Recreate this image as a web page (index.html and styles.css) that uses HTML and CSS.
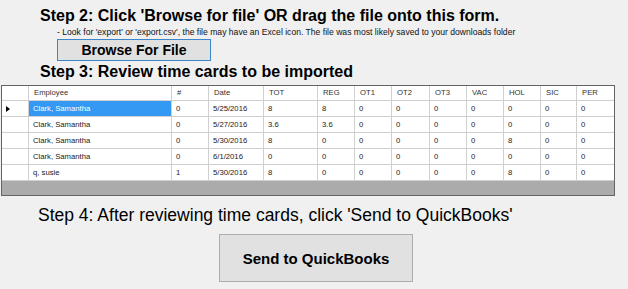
FILE: index.html
```html
<!DOCTYPE html>
<html lang="en">
<head>
    <meta charset="UTF-8">
    <title>Import Time Cards</title>
    <link rel="stylesheet" href="styles.css">
</head>
<body>
    <div class="import-form">
        <h2 class="step-title">Step 2: Click 'Browse for file' OR drag the file onto this form.</h2>
        <p class="hint">- Look for 'export' or 'export.csv', the file may have an Excel icon. The file was most likely saved to your downloads folder</p>
        <button type="button" class="browse-btn">Browse For File</button>

        <h2 class="step-title">Step 3: Review time cards to be imported</h2>

        <!-- time card grid -->
        <div class="grid-view">
            <div class="grid-row header-row">
                <div class="cell row-head"></div>
                <div class="cell">Employee</div>
                <div class="cell">#</div>
                <div class="cell">Date</div>
                <div class="cell">TOT</div>
                <div class="cell">REG</div>
                <div class="cell">OT1</div>
                <div class="cell">OT2</div>
                <div class="cell">OT3</div>
                <div class="cell">VAC</div>
                <div class="cell">HOL</div>
                <div class="cell">SIC</div>
                <div class="cell">PER</div>
            </div>
            <div class="grid-row">
                <div class="cell row-head"><span class="current-mark"></span></div>
                <div class="cell selected">Clark, Samantha</div>
                <div class="cell">0</div>
                <div class="cell">5/25/2016</div>
                <div class="cell">8</div>
                <div class="cell">8</div>
                <div class="cell">0</div>
                <div class="cell">0</div>
                <div class="cell">0</div>
                <div class="cell">0</div>
                <div class="cell">0</div>
                <div class="cell">0</div>
                <div class="cell">0</div>
            </div>
            <div class="grid-row">
                <div class="cell row-head"></div>
                <div class="cell">Clark, Samantha</div>
                <div class="cell">0</div>
                <div class="cell">5/27/2016</div>
                <div class="cell">3.6</div>
                <div class="cell">3.6</div>
                <div class="cell">0</div>
                <div class="cell">0</div>
                <div class="cell">0</div>
                <div class="cell">0</div>
                <div class="cell">0</div>
                <div class="cell">0</div>
                <div class="cell">0</div>
            </div>
            <div class="grid-row">
                <div class="cell row-head"></div>
                <div class="cell">Clark, Samantha</div>
                <div class="cell">0</div>
                <div class="cell">5/30/2016</div>
                <div class="cell">8</div>
                <div class="cell">0</div>
                <div class="cell">0</div>
                <div class="cell">0</div>
                <div class="cell">0</div>
                <div class="cell">0</div>
                <div class="cell">8</div>
                <div class="cell">0</div>
                <div class="cell">0</div>
            </div>
            <div class="grid-row">
                <div class="cell row-head"></div>
                <div class="cell">Clark, Samantha</div>
                <div class="cell">0</div>
                <div class="cell">6/1/2016</div>
                <div class="cell">0</div>
                <div class="cell">0</div>
                <div class="cell">0</div>
                <div class="cell">0</div>
                <div class="cell">0</div>
                <div class="cell">0</div>
                <div class="cell">0</div>
                <div class="cell">0</div>
                <div class="cell">0</div>
            </div>
            <div class="grid-row">
                <div class="cell row-head"></div>
                <div class="cell">q, susie</div>
                <div class="cell">1</div>
                <div class="cell">5/30/2016</div>
                <div class="cell">8</div>
                <div class="cell">0</div>
                <div class="cell">0</div>
                <div class="cell">0</div>
                <div class="cell">0</div>
                <div class="cell">0</div>
                <div class="cell">8</div>
                <div class="cell">0</div>
                <div class="cell">0</div>
            </div>
            <div class="grid-empty"></div>
        </div>

        <p class="step-note">Step 4: After reviewing time cards, click 'Send to QuickBooks'</p>
        <button type="button" class="send-btn">Send to QuickBooks</button>
    </div>
</body>
</html>
```

FILE: styles.css
```css
/* page */
body {
    margin: 0;
    padding: 0;
    background-color: #f0f0f0;
    font-family: "Liberation Sans", Arial, sans-serif;
    color: #000;
}

.import-form {
    display: flex;
    flex-direction: column;
    align-items: flex-start;
}

/* step headings */
.step-title {
    margin: 2px 0 0 40px;
    font-size: 16px;
    font-weight: bold;
    line-height: 18px;
}

.step-title:first-child {
    margin-top: 7px;
}

.hint {
    margin: 2px 0 0 57px;
    font-size: 8.6px;
    line-height: 10px;
    color: #111;
}

/* buttons */
button {
    box-sizing: border-box;
    margin: 0;
    padding: 0;
    background: #e1e1e1;
    border: 1px solid #adadad;
    font-family: "Liberation Sans", Arial, sans-serif;
    font-weight: bold;
    color: #000;
    cursor: pointer;
}

.browse-btn {
    margin: 2px 0 0 57px;
    width: 154px;
    height: 22px;
    font-size: 14px;
    border-color: #3c85c9;
}

.send-btn {
    margin: 9px 0 0 219px;
    width: 194px;
    height: 48px;
    font-size: 15px;
}

.step-note {
    margin: 9px 0 0 38px;
    font-size: 17.5px;
    line-height: 20px;
}

/* grid view */
.grid-view {
    box-sizing: border-box;
    margin: 4px 0 0 1px;
    width: 614px;
    border: 1px solid #646464;
    background: #ababab;
    font-size: 7.7px;
    color: #222;
}

.grid-row {
    display: grid;
    grid-template-columns: 27px 143px 37px 55px 54px 37px 37px 38px 37px 37px 37px 36px 37px;
    height: 16px;
    background: #fff;
}

.header-row {
    height: 15px;
    color: #333;
}

.cell {
    box-sizing: border-box;
    border-right: 1px solid #d0d0d0;
    border-bottom: 1px solid #d0d0d0;
    padding-left: 4px;
    line-height: 15px;
    white-space: nowrap;
    overflow: hidden;
}

.header-row .cell {
    line-height: 14px;
    padding-left: 5px;
}

.cell:last-child {
    border-right: none;
}

.row-head {
    position: relative;
}

.cell.selected {
    background: #3399f3;
    color: #fff;
}

/* current row marker */
.current-mark {
    position: absolute;
    left: 4px;
    top: 5px;
    width: 0;
    height: 0;
    border-top: 3px solid transparent;
    border-bottom: 3px solid transparent;
    border-left: 4px solid #000;
}

.grid-empty {
    height: 14px;
}
```
